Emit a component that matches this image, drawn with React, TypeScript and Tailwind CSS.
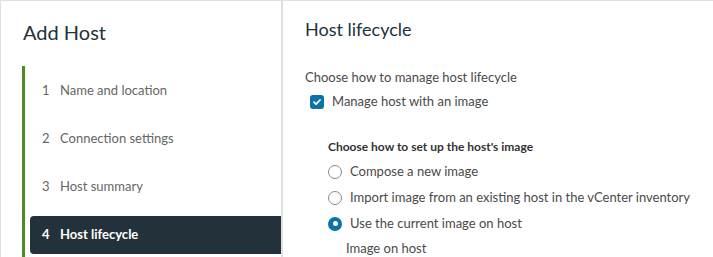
import React from 'react';

const steps = [
  { n: 1, label: 'Name and location' },
  { n: 2, label: 'Connection settings' },
  { n: 3, label: 'Host summary' },
  { n: 4, label: 'Host lifecycle', active: true },
];

const options = [
  { label: 'Compose a new image', checked: false },
  { label: 'Import image from an existing host in the vCenter inventory', checked: false },
  { label: 'Use the current image on host', checked: true },
];

const Radio: React.FC<{ checked: boolean }> = ({ checked }) =>
  checked ? (
    <span className="w-[14px] h-[14px] rounded-full bg-[#0a73a8] flex items-center justify-center shrink-0">
      <span className="w-[5px] h-[5px] rounded-full bg-white" />
    </span>
  ) : (
    <span className="w-[14px] h-[14px] rounded-full border border-[#8c8c8c] bg-white shrink-0" />
  );

const App: React.FC = () => {
  return (
    <div
      className="w-[713px] h-[257px] overflow-hidden bg-white flex border-t border-l border-[#dde1e4] text-[#313131] whitespace-nowrap"
      style={{ fontFamily: 'Lato, "Noto Sans", sans-serif' }}
    >
      {/* sidebar */}
      <div className="w-[282px] shrink-0 border-r-2 border-[#dde1e4] flex flex-col">
        <h1 className="shrink-0 pl-[22px] pt-[19px] h-[65px] text-[20px] leading-[24px] text-[#22313b]">Add Host</h1>
        <div className="shrink-0 ml-[21px] border-l-[3px] border-[#4e8b23] flex-1 pl-[5px] pt-[1px]">
          {steps.map((s) => (
            <div key={s.n} className="h-[48px] flex items-center">
              {s.active ? (
                <div className="h-[38px] w-full rounded-l-[4px] bg-[#23313a] flex items-center pl-[12px] text-white font-bold text-[13px]">
                  <span className="w-[18px]">{s.n}</span>
                  <span>{s.label}</span>
                </div>
              ) : (
                <div className="flex items-center pl-[12px] text-[13px] text-[#666]">
                  <span className="w-[18px]">{s.n}</span>
                  <span>{s.label}</span>
                </div>
              )}
            </div>
          ))}
        </div>
      </div>

      {/* content */}
      <div className="flex-1 pl-[22px] pt-[17px]">
        <h2 className="text-[18px] leading-[22px] text-[#22313b]">Host lifecycle</h2>
        <p className="mt-[29px] text-[13px] leading-[16px] text-[#4a4a4a]">Choose how to manage host lifecycle</p>
        <label className="mt-[7px] ml-[5px] flex items-center gap-[8px] text-[13px] text-[#4a4a4a]">
          <span className="w-[14px] h-[14px] rounded-[3px] bg-[#0a73a8] flex items-center justify-center">
            <svg width="10" height="10" viewBox="0 0 10 10" fill="none">
              <path d="M2 5.2 L4.1 7.2 L8 3" stroke="white" strokeWidth="1.8" strokeLinecap="round" strokeLinejoin="round" />
            </svg>
          </span>
          Manage host with an image
        </label>
        <div className="ml-[23px] mt-[27px]">
          <p className="text-[12px] leading-[16px] font-bold text-[#333]">Choose how to set up the host's image</p>
          <div className="mt-[4px] flex flex-col">
            {options.map((o) => (
              <div key={o.label} className="h-[26px] flex items-center gap-[8px] text-[13px] text-[#4a4a4a]">
                <Radio checked={o.checked} />
                {o.label}
              </div>
            ))}
          </div>
          <div className="ml-[18px] mt-[3px] w-[285px] border-b border-[#b8bec2] text-[13px] leading-[16px] text-[#4a4a4a] pb-[1px]">
            Image on host
          </div>
        </div>
      </div>
    </div>
  );
};

export default App;
